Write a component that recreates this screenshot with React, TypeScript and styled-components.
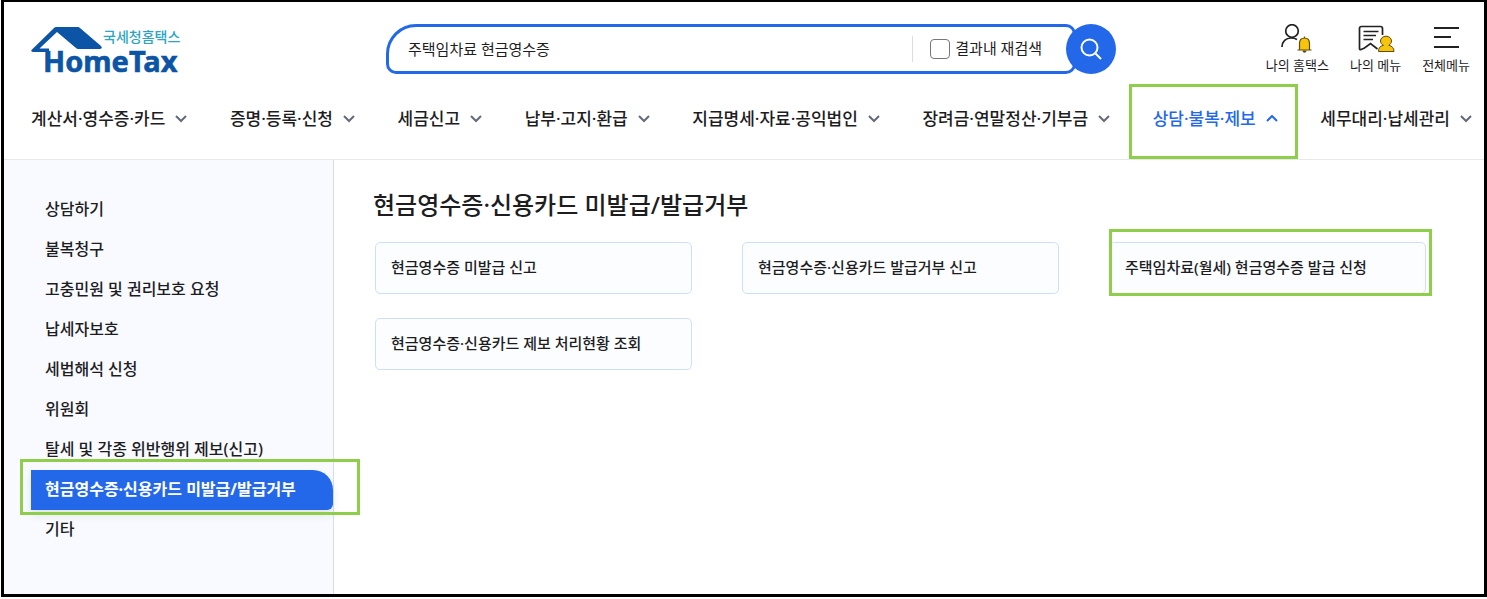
import React from "react";
import styled, { createGlobalStyle, css } from "styled-components";

const color = {
  blue: "#2468ea",
  navy: "#0c54a5",
  teal: "#2ba5c3",
  ink: "#1d1d1f",
  line: "#e6e8eb",
  cardLine: "#cfdffb",
  mark: "#8fce4b",
  yellow: "#f6c40d",
};

const GlobalStyle = createGlobalStyle`
  * { box-sizing: border-box; }
  body {
    margin: 0;
    background: #fff;
    color: ${color.ink};
    font-family: "Noto Sans", "Noto Sans CJK KR", sans-serif;
  }
  a { color: inherit; text-decoration: none; }
  ul { list-style: none; margin: 0; padding: 0; }
  button, input { font: inherit; color: inherit; }
`;

const Page = styled.div`
  display: flex;
  min-height: 100vh;
  padding: 0 0 2px 1px;
`;

const Frame = styled.div`
  flex: 1;
  min-width: 0;
  display: flex;
  flex-direction: column;
  border: 3px solid #000;
  border-top-width: 2px;
`;

const Header = styled.header`
  border-bottom: 1px solid ${color.line};
`;

const TopRow = styled.div`
  display: flex;
  align-items: flex-start;
  height: 72px;
  padding: 22px 14px 0 27px;
`;

const LogoLink = styled.a`
  display: block;
  flex: none;
  width: 160px;
  margin-right: 195px;
`;

const SearchForm = styled.form`
  position: relative;
  display: flex;
  align-items: center;
  flex: 0 1 730px;
  min-width: 0;
  height: 50px;
  padding-right: 40px;
`;

const SearchBox = styled.div`
  flex: 1;
  min-width: 0;
  display: flex;
  align-items: center;
  height: 50px;
  padding: 0 31px 0 19px;
  border: 3px solid ${color.blue};
  border-radius: 30px 10px 10px 10px;
`;

const SearchInput = styled.input`
  flex: 1;
  min-width: 0;
  height: 40px;
  padding: 0 0 2px;
  border: 0;
  outline: 0;
  background: none;
  font-size: 15px;
`;

const Again = styled.label`
  display: flex;
  align-items: center;
  gap: 5px;
  height: 26px;
  padding-left: 17px;
  border-left: 1px solid #dcdcdc;
  font-size: 15px;
  line-height: 24px;
  white-space: nowrap;
`;

const AgainText = styled.span`
  padding-bottom: 2px;
`;

const Check = styled.input`
  appearance: none;
  width: 20px;
  height: 20px;
  margin: 0;
  border: 1px solid #777;
  border-radius: 4px;
  background: #fff;
`;

const SearchButton = styled.button`
  position: absolute;
  top: 0;
  right: 0;
  width: 50px;
  height: 50px;
  padding: 0;
  border: 0;
  border-radius: 50%;
  background: ${color.blue};
  svg { display: block; margin: auto; }
`;

const Utilities = styled.ul`
  display: flex;
  gap: 21px;
  margin-left: auto;
`;

const UtilityButton = styled.button`
  display: flex;
  flex-direction: column;
  align-items: center;
  padding: 0;
  border: 0;
  background: none;
  font-size: 13px;
  line-height: 18px;
  white-space: nowrap;
`;

const Nav = styled.nav`
  padding: 22px 12px 0 27px;
`;

const NavList = styled.ul`
  display: flex;
  justify-content: space-between;
  height: 63px;
`;

const NavItem = styled.li`
  position: relative;
`;

const NavButton = styled.button<{ $open?: boolean }>`
  display: flex;
  align-items: center;
  gap: 10px;
  height: 42px;
  padding: 0;
  border: 0;
  background: none;
  color: ${(p) => (p.$open ? color.blue : color.ink)};
  font-size: 17px;
  font-weight: 500;
  white-space: nowrap;
  svg {
    margin-top: 4px;
    stroke: ${(p) => (p.$open ? color.blue : "#666a78")};
  }
`;

const Mark = styled.span<{ $inset: string }>`
  position: absolute;
  inset: ${(p) => p.$inset};
  border: 3px solid ${color.mark};
  pointer-events: none;
  z-index: 1;
`;

const Body = styled.div`
  flex: 1;
  display: flex;
`;

const Sidebar = styled.nav`
  flex: none;
  width: 330px;
  padding: 30px 0 20px 27px;
  border-right: 1px solid #d5def0;
  background: #f8faff;
`;

const SideItem = styled.li`
  position: relative;
`;

const SideLink = styled.a<{ $active?: boolean }>`
  display: block;
  height: 40px;
  padding-left: 14px;
  font-size: 16px;
  font-weight: 500;
  line-height: 38px;
  white-space: nowrap;
  ${(p) =>
    p.$active &&
    css`
      border-radius: 0 20px 6px 0;
      background: ${color.blue};
      box-shadow: 0 5px 8px rgba(30, 50, 100, 0.1);
      color: #fff;
      font-weight: 700;
    `}
`;

const Main = styled.main`
  flex: 1;
  min-width: 0;
  padding: 27px 58px 40px 39px;
`;

const Title = styled.h1`
  margin: 0 0 19px;
  font-size: 24px;
  font-weight: 500;
  line-height: 36px;
`;

const Cards = styled.ul`
  display: grid;
  grid-template-columns: repeat(3, minmax(0, 1fr));
  gap: 24px 50px;
  padding-left: 2px;
`;

const CardItem = styled.li`
  position: relative;
`;

const CardLink = styled.a`
  display: flex;
  align-items: center;
  min-height: 52px;
  padding: 0 15px 2px;
  border: 1px solid ${color.cardLine};
  border-radius: 5px;
  background: #fbfdff;
  font-size: 15px;
  font-weight: 500;
  line-height: 24px;
`;

function Logo() {
  return (
    <svg width="160" height="58" viewBox="31 24 160 58" role="img" aria-label="국세청홈택스 HomeTax">
      <path
        d="M56 27H78Q79 27 80 28L101 46Q103 48.500 100 49H78Q77 49 76 48L57 32L39.500 48.500H49V52H33Q30 51.500 32 49.500L54 28Q55 27 56 27Z"
        fill={color.navy}
      />
      <text x="103" y="42" fontSize="14" fontWeight="500" fill={color.teal}>
        국세청홈택스
      </text>
      <text
        x="43"
        y="72"
        fontSize="29"
        fontWeight="700"
        fontFamily='"Noto Sans", "Open Sans", sans-serif'
        fill={color.navy}
        stroke={color.navy}
        strokeWidth="0.600"
      >
        HomeTax
      </text>
    </svg>
  );
}

function Chevron({ up }: { up?: boolean }) {
  return (
    <svg width="12" height="8" viewBox="0 0 12 8" fill="none" strokeWidth="2" aria-hidden="true">
      <path d={up ? "M1 6L6 1L11 6" : "M1 1L6 6L11 1"} />
    </svg>
  );
}

function UserBellIcon() {
  return (
    <svg width="40" height="32" viewBox="0 0 40 32" fill="none" aria-hidden="true">
      <circle cx="15" cy="7" r="6.300" stroke="#222" strokeWidth="1.700" />
      <path d="M5 23C5 17.500 9 14 14 14C16.500 14 18.500 14.500 20 15.500" stroke="#222" strokeWidth="1.700" />
      <path
        d="M27.500 12.500V14M20.500 26H34.500M22.500 26V19.500C22.500 16 24.500 14 27.500 14S32.500 16 32.500 19.500V26"
        fill={color.yellow}
        stroke="#5e4c10"
        strokeWidth="1.200"
      />
      <path d="M25.500 26.500C25.500 29.500 29.500 29.500 29.500 26.500Z" fill="#5e4c10" />
    </svg>
  );
}

function MyMenuIcon() {
  return (
    <svg width="40" height="32" viewBox="0 0 40 32" fill="none" aria-hidden="true">
      <path
        d="M26.500 11V4.500Q26.500 2.500 24.500 2.500H5.500Q3.500 2.500 3.500 4.500V24.500Q3.500 26 5 25.500L8.500 24L14.500 19.500L21.500 25"
        stroke="#222"
        strokeWidth="1.700"
      />
      <path d="M7.500 7.500H22.500M7.500 11.500H20M7.500 15.500H17" stroke="#222" strokeWidth="1.400" />
      <path
        d="M22.500 27.500C22.500 24 24 22 27.500 21.300C25.500 20.300 24.500 18.700 24.500 17C24.500 14.200 27 12.200 30 12.200S35.500 14.200 35.500 17C35.500 18.700 34.500 20.300 32.800 21.300C36 22 38 24 38 27.500Z"
        fill={color.yellow}
        stroke="#5e4c10"
        strokeWidth="1"
      />
    </svg>
  );
}

function AllMenuIcon() {
  return (
    <svg width="40" height="32" viewBox="0 0 40 32" stroke="#222" strokeWidth="2" aria-hidden="true">
      <path d="M8 4H33M8 13H25M8 23H33" />
    </svg>
  );
}

const menus = [
  "계산서·영수증·카드",
  "증명·등록·신청",
  "세금신고",
  "납부·고지·환급",
  "지급명세·자료·공익법인",
  "장려금·연말정산·기부금",
  "상담·불복·제보",
  "세무대리·납세관리",
];
const openMenu = "상담·불복·제보";

const sections = [
  "상담하기",
  "불복청구",
  "고충민원 및 권리보호 요청",
  "납세자보호",
  "세법해석 신청",
  "위원회",
  "탈세 및 각종 위반행위 제보(신고)",
  "현금영수증·신용카드 미발급/발급거부",
  "기타",
];
const activeSection = "현금영수증·신용카드 미발급/발급거부";

const services = [
  { name: "현금영수증 미발급 신고" },
  { name: "현금영수증·신용카드 발급거부 신고" },
  { name: "주택임차료(월세) 현금영수증 발급 신청", marked: true },
  { name: "현금영수증·신용카드 제보 처리현황 조회" },
];

export default function App() {
  return (
    <Page>
      <GlobalStyle />
      <Frame>
        <Header>
          <TopRow>
            <LogoLink href="#home">
              <Logo />
            </LogoLink>
            <SearchForm role="search" onSubmit={(e) => e.preventDefault()}>
              <SearchBox>
                <SearchInput type="text" aria-label="검색어" defaultValue="주택임차료 현금영수증" />
                <Again>
                  <Check type="checkbox" />
                  <AgainText>결과내 재검색</AgainText>
                </Again>
              </SearchBox>
              <SearchButton type="submit" aria-label="검색">
                <svg width="24" height="24" viewBox="0 0 24 24" fill="none" stroke="#fff" strokeWidth="2">
                  <circle cx="10.500" cy="10.500" r="8" />
                  <path d="M16.500 16.500L22 22" />
                </svg>
              </SearchButton>
            </SearchForm>
            <Utilities>
              <li>
                <UtilityButton type="button">
                  <UserBellIcon />
                  나의 홈택스
                </UtilityButton>
              </li>
              <li>
                <UtilityButton type="button">
                  <MyMenuIcon />
                  나의 메뉴
                </UtilityButton>
              </li>
              <li>
                <UtilityButton type="button">
                  <AllMenuIcon />
                  전체메뉴
                </UtilityButton>
              </li>
            </Utilities>
          </TopRow>
          <Nav aria-label="주 메뉴">
            <NavList>
              {menus.map((name) => {
                const open = name === openMenu;
                return (
                  <NavItem key={name}>
                    <NavButton type="button" $open={open} aria-expanded={open}>
                      {name}
                      <Chevron up={open} />
                    </NavButton>
                    {open && <Mark $inset="-12px -20px 0 -24px" />}
                  </NavItem>
                );
              })}
            </NavList>
          </Nav>
        </Header>
        <Body>
          <Sidebar aria-label="하위 메뉴">
            <ul>
              {sections.map((name) => {
                const active = name === activeSection;
                return (
                  <SideItem key={name}>
                    <SideLink href="#section" $active={active} aria-current={active ? "page" : undefined}>
                      {name}
                    </SideLink>
                    {active && <Mark $inset="-11px -27px -5px -11px" />}
                  </SideItem>
                );
              })}
            </ul>
          </Sidebar>
          <Main>
            <Title>{activeSection}</Title>
            <Cards>
              {services.map((service) => (
                <CardItem key={service.name}>
                  <CardLink href="#service">{service.name}</CardLink>
                  {service.marked && <Mark $inset="-13px -6px -2px 0" />}
                </CardItem>
              ))}
            </Cards>
          </Main>
        </Body>
      </Frame>
    </Page>
  );
}
